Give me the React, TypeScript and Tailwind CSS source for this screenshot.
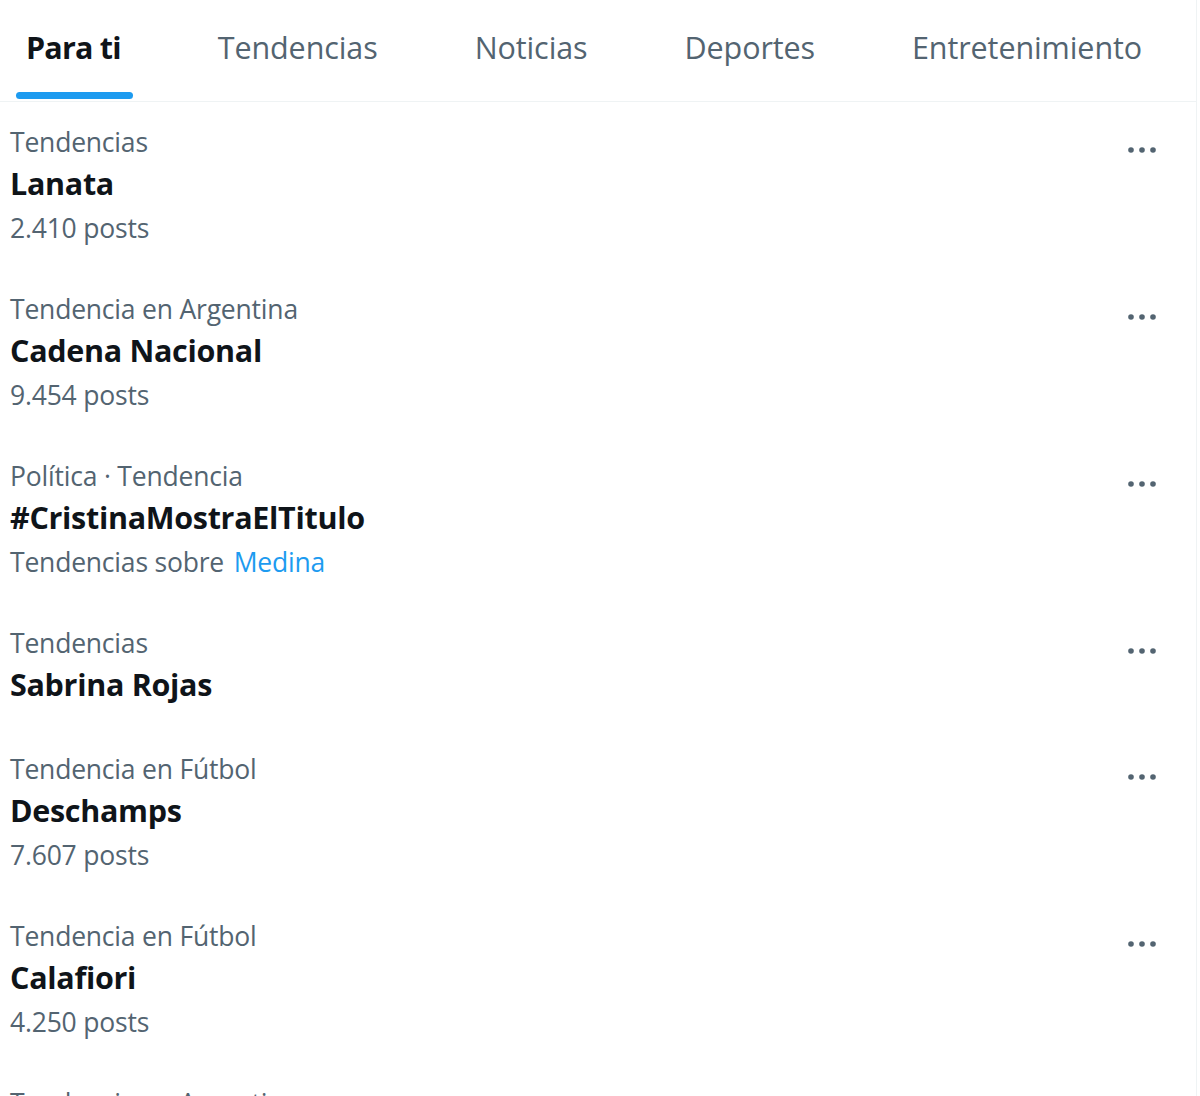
import React from "react";

type Trend = {
  label: string;
  title: string;
  sub?: React.ReactNode;
};

const trends: Trend[] = [
  { label: "Tendencias", title: "Lanata", sub: "2.410 posts" },
  { label: "Tendencia en Argentina", title: "Cadena Nacional", sub: "9.454 posts" },
  {
    label: "Política · Tendencia",
    title: "#CristinaMostraElTitulo",
    sub: (
      <>
        Tendencias sobre <span className="ml-[3px] text-[#1d9bf0]">Medina</span>
      </>
    ),
  },
  { label: "Tendencias", title: "Sabrina Rojas" },
  { label: "Tendencia en Fútbol", title: "Deschamps", sub: "7.607 posts" },
  { label: "Tendencia en Fútbol", title: "Calafiori", sub: "4.250 posts" },
  { label: "Tendencia en Argentina", title: "Milei", sub: "12.300 posts" },
];

const tabs = ["Para ti", "Tendencias", "Noticias", "Deportes", "Entretenimiento"];

function Dots() {
  return (
    <svg width="32" height="10" viewBox="0 0 32 10" className="mt-[19px] shrink-0">
      <circle cx="5" cy="5" r="2.8" fill="#536471" />
      <circle cx="16" cy="5" r="2.8" fill="#536471" />
      <circle cx="27" cy="5" r="2.8" fill="#536471" />
    </svg>
  );
}

export default function App() {
  return (
    <div
      className="w-[1197px] h-[1096px] overflow-hidden border-r border-[#eff3f4] bg-white"
      style={{ fontFamily: '"Open Sans", "Noto Sans", sans-serif' }}
    >
      <div className="flex h-[102px] gap-[97px] border-b border-[#eff3f4] pl-[26px]">
        {tabs.map((t, i) => (
          <div key={t} className="relative flex h-full items-start pt-[26px]">
            <span
              className={
                i === 0
                  ? "text-[30.5px] leading-[42px] font-bold text-[#0f1419] tracking-[-0.8px]"
                  : "text-[30.5px] leading-[42px] font-medium text-[#536471] tracking-[-0.1px]"
              }
            >
              {t}
            </span>
            {i === 0 && (
              <div className="absolute bottom-[2px] left-[-10px] right-[-12px] h-[7px] rounded-full bg-[#1d9bf0]" />
            )}
          </div>
        ))}
      </div>
      <div className="flex flex-col">
        {trends.map((tr, i) => (
          <div key={i} className="flex justify-between pl-[10px] pr-[38px] pt-[24px] pb-[20px]">
            <div className="flex flex-col">
              <div className="h-[33px] text-[26.5px] leading-[33px] text-[#536471] tracking-[-0.2px]">
                {tr.label}
              </div>
              <div className="h-[49px] text-[30.5px] leading-[49px] font-bold text-[#0f1419] tracking-[-0.3px]">
                {tr.title}
              </div>
              {tr.sub && (
                <div className="h-[41px] text-[26.5px] leading-[41px] text-[#536471] tracking-[-0.2px]">
                  {tr.sub}
                </div>
              )}
            </div>
            <Dots />
          </div>
        ))}
      </div>
    </div>
  );
}
